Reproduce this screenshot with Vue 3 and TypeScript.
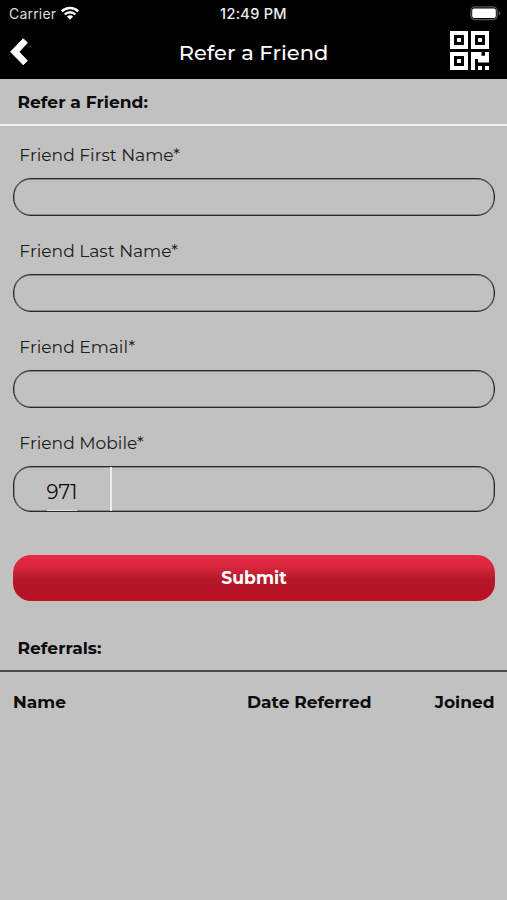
<script setup lang="ts">
import { reactive } from 'vue'

interface Field {
  key: 'firstName' | 'lastName' | 'email'
  label: string
}

const fields: Field[] = [
  { key: 'firstName', label: 'Friend First Name*' },
  { key: 'lastName', label: 'Friend Last Name*' },
  { key: 'email', label: 'Friend Email*' },
]

const form = reactive({ firstName: '', lastName: '', email: '', mobile: '' })
const countryCode = '971'
</script>

<template>
  <div class="screen">
    <header class="top">
      <div class="status">
        <div class="carrier">
          <span>Carrier</span>
          <svg class="wifi" viewBox="0 0 18 14" width="18" height="14">
            <g fill="none" stroke="#fff" stroke-width="2.4">
              <path d="M0.8 5.3a11.7 11.7 0 0 1 16.4 0" />
              <path d="M3.7 8.5a7.5 7.5 0 0 1 10.6 0" />
            </g>
            <path d="M9 13.700L5.900 10.600a4.400 4.400 0 0 1 6.200 0z" fill="#fff" />
          </svg>
        </div>
        <span class="clock">12:49 PM</span>
        <svg class="battery" viewBox="0 0 31 15" width="31" height="15">
          <rect x="0.9" y="0.9" width="26.2" height="12.7" rx="4" fill="none" stroke="#555" stroke-width="1.4" />
          <rect x="2.2" y="2.4" width="23.600" height="9.700" rx="2" fill="#fff" />
          <path d="M28.6 5c2.4 1 2.4 3.500 0 4.500z" fill="#555" />
        </svg>
      </div>
      <nav class="nav">
        <button class="icon-btn back" aria-label="Back">
          <svg viewBox="0 0 18 28" width="18" height="28">
            <path d="M13.300 .8L17.300 4.800 9 13.800 17.300 22.800 13.300 26.800 .6 13.800z" fill="#fff" stroke="#fff" stroke-width="1" stroke-linejoin="round" />
          </svg>
        </button>
        <h1>Refer a Friend</h1>
        <button class="icon-btn qr" aria-label="QR code">
          <svg viewBox="0 0 39 39" width="39" height="39" fill="#fff">
            <path fill-rule="evenodd" d="M0 0h18v18H0zM4 4v10h10V4zM21 0h18v18H21zM25 4v10h10V4zM0 21h18v18H0zM4 25v10h10V25z" />
            <path d="M7 7h4v4H7zM28 7h4v4h-4zM7 28h4v4H7zM21 21h10.500v3.800H35V21h4v10.600H28V28h-3v11h-4zM28 35h4v4h-4zM35 35h4v4h-4z" />
          </svg>
        </button>
      </nav>
    </header>

    <h2 class="section light"><span>Refer a Friend:</span></h2>

    <form class="form" @submit.prevent>
      <div v-for="field in fields" :key="field.key" class="field">
        <label :for="field.key">{{ field.label }}</label>
        <input :id="field.key" v-model="form[field.key]" type="text" />
      </div>
      <div class="field">
        <label for="mobile">Friend Mobile*</label>
        <div class="phone">
          <div class="code"><span>{{ countryCode }}</span></div>
          <input id="mobile" v-model="form.mobile" type="tel" />
        </div>
      </div>
      <button class="submit" type="submit">Submit</button>
    </form>

    <h2 class="section dark"><span>Referrals:</span></h2>
    <div class="columns">
      <span>Name</span>
      <span>Date Referred</span>
      <span>Joined</span>
    </div>
  </div>
</template>

<style>
body {
  background: #c1c1c1;
}
</style>

<style scoped>
.screen {
  min-height: 900px;
  box-sizing: border-box;
  background: #c1c1c1;
  color: #0b0b0b;
  font-family: Montserrat, Inter, 'Liberation Sans', sans-serif;
}
button,
input {
  font-family: inherit;
  padding: 0;
  margin: 0;
  border: 0;
  background: none;
}
.top {
  height: 79px;
  background: #000;
  color: #fff;
}
.status {
  height: 27px;
  display: grid;
  grid-template-columns: 1fr auto 1fr;
  align-items: center;
  padding: 0 6px 0 9px;
  font-family: Inter, sans-serif;
  font-size: 14px;
}
.carrier {
  display: flex;
  align-items: center;
  gap: 5px;
  color: #ddd;
  letter-spacing: 0.2px;
}
.wifi {
  margin-top: -2px;
}
.clock {
  font-size: 14.5px;
  font-weight: 500;
  letter-spacing: 0.3px;
  color: #eee;
  margin-left: -3px;
}
.battery {
  justify-self: end;
}
.nav {
  height: 52px;
  display: grid;
  grid-template-columns: 60px 1fr 60px;
  align-items: center;
  padding: 0 18px 4px 9.5px;
  box-sizing: border-box;
}
.icon-btn {
  display: flex;
}
.back {
  margin-top: 2px;
}
.qr {
  justify-self: end;
  margin-bottom: 2px;
}
h1 {
  margin: 2px 0 0 8.5px;
  text-align: center;
  font-size: 21px;
  font-weight: 500;
}
h2 {
  margin: 0;
}
.section {
  height: 47px;
  box-sizing: border-box;
  display: flex;
  align-items: center;
  padding-left: 17.5px;
  font-size: 17.100px;
  font-weight: 700;
}
.light {
  border-bottom: 2px solid #efefef;
}
.form {
  padding: 16px 12px 0 13px;
}
.field {
  display: flex;
  flex-direction: column;
  margin-bottom: 22px;
}
label {
  height: 26px;
  margin-bottom: 10px;
  padding-left: 6.300px;
  line-height: 26px;
  font-size: 17.100px;
  font-weight: 400;
  color: #1c1c1c;
}
.field > input,
.phone {
  height: 38px;
  box-sizing: border-box;
  border: 1px solid #292929;
  border-radius: 18px;
  box-shadow: inset 0 0 0 0.5px #555;
}
.phone {
  height: 46px;
  display: flex;
}
.phone input {
  flex: 1;
  min-width: 0;
}
.code {
  width: 98px;
  box-sizing: border-box;
  display: flex;
  justify-content: center;
  align-items: flex-end;
  border-right: 2px solid #ececec;
}
.code span {
  height: 31px;
  border-bottom: 1px solid #ddd;
  font-size: 19.800px;
  line-height: 27px;
}
.submit {
  display: block;
  width: 100%;
  height: 46px;
  margin-top: 43px;
  padding-bottom: 1px;
  border-radius: 18px;
  background: linear-gradient(#e92843 0%, #da2640 25%, #b51a29 52%, #b41426 70%, #bd1024 100%);
  color: #fff;
  font-size: 17.200px;
  font-weight: 700;
}
.dark {
  margin-top: 24px;
  border-bottom: 2px solid #4a4a4a;
}
.columns {
  display: grid;
  grid-template-columns: 234px 1fr auto;
  padding: 18px 12.500px 0 13px;
  font-size: 17px;
  line-height: 24px;
  font-weight: 700;
}
</style>
